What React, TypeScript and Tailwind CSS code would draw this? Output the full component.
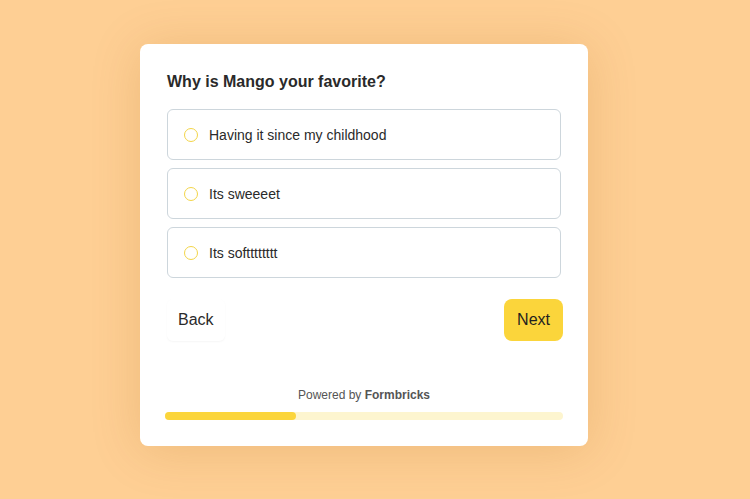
const options = ['Having it since my childhood', 'Its sweeeet', 'Its softttttttt']

export default function App() {
  return (
    <div
      className="flex h-[499px] w-[750px] items-start bg-[#fecf94] pl-[140px] pt-[44px]"
      style={{ fontFamily: '"Liberation Sans", Arial, sans-serif' }}
    >
      <div className="w-[448px] rounded-lg bg-white px-[25px] pb-[26px] pt-[26px] shadow-[0_4px_50px_rgba(160,90,0,0.18)]">
        <h1 className="mx-[2px] text-base font-bold leading-6 text-[#2a2a2a]">
          Why is Mango your favorite?
        </h1>

        <div className="mx-[2px] mt-[15px] flex flex-col gap-[8px]">
          {options.map((o) => (
            <label
              key={o}
              className="flex h-[51px] items-center rounded-md border border-[#cdd6dc] pl-[16px]"
            >
              <span className="h-[14px] w-[14px] rounded-full border border-[#f3d548]" />
              <span className="ml-[11px] text-sm text-[#2a2a2a]">{o}</span>
            </label>
          ))}
        </div>

        <div className="mt-[21px] flex items-center justify-between">
          <button className="ml-[2px] h-[42px] rounded-md bg-white px-[11px] text-base text-[#2a2a2a] shadow-[0_1px_2px_rgba(0,0,0,0.04)]">
            Back
          </button>
          <button className="h-[42px] rounded-lg bg-[#fbd53b] px-[13px] text-base text-[#1f1f1f]">
            Next
          </button>
        </div>

        <p className="mt-[46px] text-center text-xs text-[#555]">
          Powered by <span className="font-bold">Formbricks</span>
        </p>
        <div className="mt-[9px] h-[8px] w-full rounded-full bg-[#fdf5cf]">
          <div className="h-full w-[33%] rounded-full bg-[#fbd53b]" />
        </div>
      </div>
    </div>
  )
}
